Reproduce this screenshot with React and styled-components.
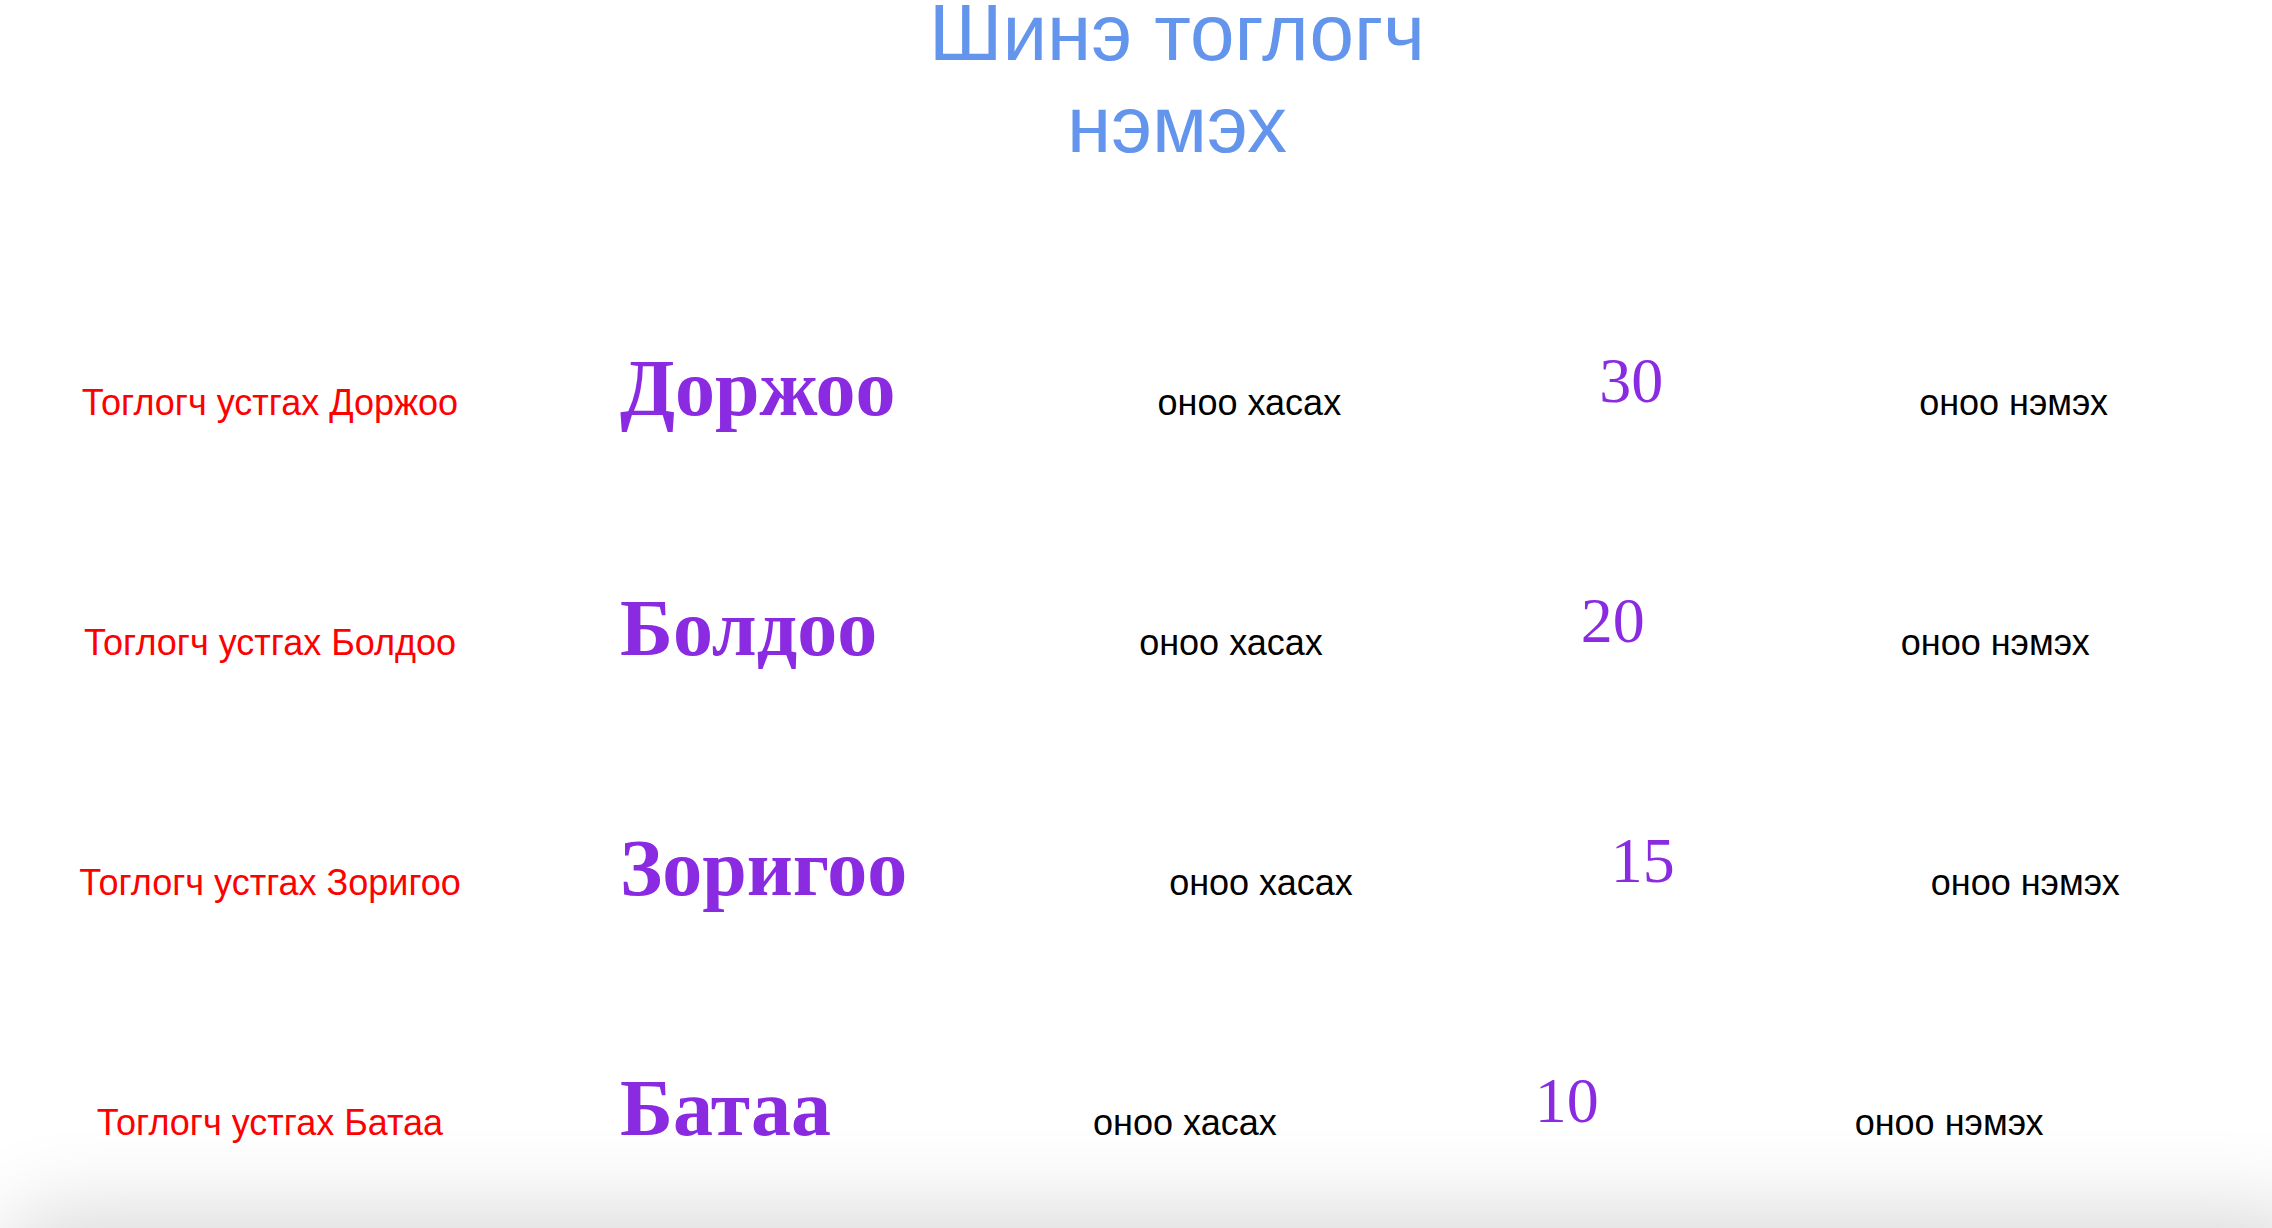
import React from "react";
import styled, { createGlobalStyle } from "styled-components";

const GlobalStyle = createGlobalStyle`
  html, body {
    margin: 0;
    padding: 0;
    background: #ffffff;
    overflow: hidden;
  }
  body {
    font-family: "Liberation Sans", Arial, sans-serif;
  }
`;

const Page = styled.div`
  display: flex;
  flex-direction: column;
  min-height: 100vh;
`;

const Header = styled.header`
  display: flex;
  justify-content: center;
  padding-left: 82px;
  margin-top: -13px;
`;

const Title = styled.h1`
  margin: 0;
  max-width: 520px;
  text-align: center;
  font-family: "Liberation Sans", Arial, sans-serif;
  font-weight: 400;
  font-size: 80px;
  line-height: 92px;
  color: cornflowerblue;
`;

const PlayerList = styled.div`
  display: flex;
  flex-direction: column;
  margin-top: 177px;
`;

const Row = styled.div`
  display: flex;
  align-items: baseline;
  height: 240px;
`;

const RemoveCell = styled.div`
  width: 540px;
  flex: none;
  text-align: center;
`;

const RemoveButton = styled.span`
  font-family: "Liberation Sans", Arial, sans-serif;
  font-size: 36px;
  color: #ff0000;
  cursor: pointer;
`;

const Name = styled.div`
  margin-left: 80px;
  font-family: "Liberation Serif", "Times New Roman", serif;
  font-weight: 700;
  font-size: 80px;
  line-height: 1;
  color: blueviolet;
`;

const ScoreAction = styled.div`
  margin-left: ${(p) => (p.$first ? "262px" : "256px")};
  font-family: "Liberation Sans", Arial, sans-serif;
  font-size: 36px;
  color: #000000;
  cursor: pointer;
`;

const ScoreCell = styled.div`
  margin-left: 258px;
  font-family: "Liberation Serif", "Times New Roman", serif;
  font-size: 64px;
  line-height: 1;
  color: blueviolet;
`;

const ScoreValue = styled.span`
  vertical-align: 13px;
`;

const BottomShade = styled.div`
  position: fixed;
  left: 14px;
  right: -40px;
  top: 100vh;
  height: 200px;
  border-radius: 40px;
  box-shadow: 0 -4px 90px 10px rgba(0, 0, 0, 0.16);
  pointer-events: none;
`;

const players = [
  { name: "Доржоо", score: 30 },
  { name: "Болдоо", score: 20 },
  { name: "Зоригоо", score: 15 },
  { name: "Батаа", score: 10 },
];

export default function App() {
  return (
    <>
      <GlobalStyle />
      <Page>
        <Header>
          <Title>Шинэ тоглогч нэмэх</Title>
        </Header>
        <PlayerList>
          {players.map((p) => (
            <Row key={p.name}>
              <RemoveCell>
                <RemoveButton>Тоглогч устгах {p.name}</RemoveButton>
              </RemoveCell>
              <Name>{p.name}</Name>
              <ScoreAction $first>оноо хасах</ScoreAction>
              <ScoreCell>
                <ScoreValue>{p.score}</ScoreValue>
              </ScoreCell>
              <ScoreAction>оноо нэмэх</ScoreAction>
            </Row>
          ))}
        </PlayerList>
      </Page>
      <BottomShade />
    </>
  );
}
